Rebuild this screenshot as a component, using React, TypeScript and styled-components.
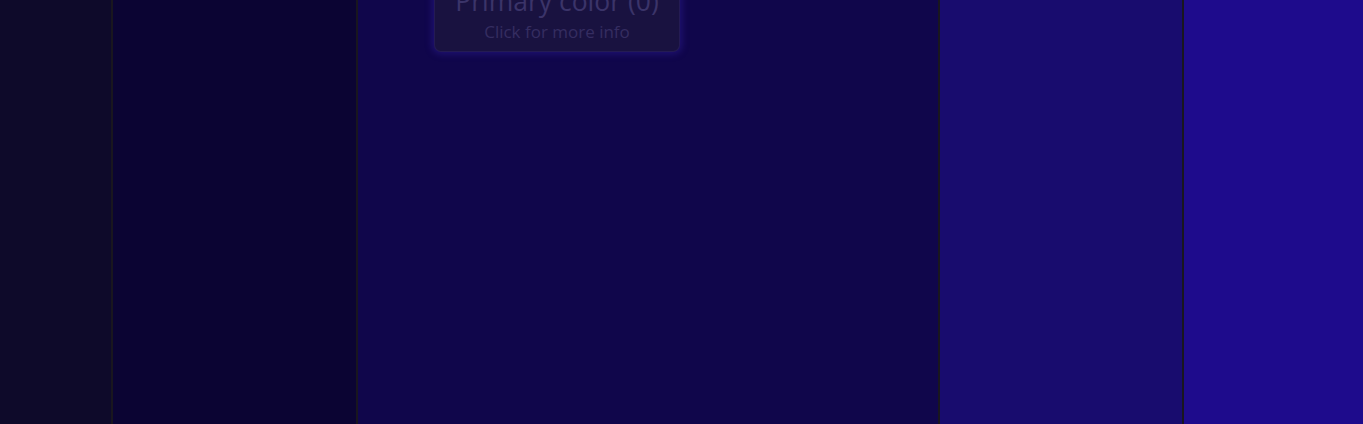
import React from "react";
import styled, { createGlobalStyle } from "styled-components";

const Global = createGlobalStyle`
  html, body { margin: 0; padding: 0; background: #0e0a2a; overflow: hidden; }
  #root { width: 1363px; height: 424px; }
`;

const Strip = styled.div`
  position: relative;
  display: flex;
  width: 1363px;
  height: 424px;
  overflow: hidden;
  font-family: "Open Sans", "Noto Sans", sans-serif;
`;

const Swatch = styled.div<{ $bg: string; $w: number; $first?: boolean }>`
  flex: 0 0 ${(p) => p.$w}px;
  height: 100%;
  background: ${(p) => p.$bg};
  border-left: ${(p) => (p.$first ? "none" : "2px solid #19161f")};
  box-sizing: border-box;
`;

const Tooltip = styled.div`
  position: absolute;
  left: 434px;
  top: -24px;
  width: 246px;
  box-sizing: border-box;
  padding: 8px 10px;
  display: flex;
  flex-direction: column;
  align-items: center;
  gap: 4px;
  background: #191240;
  border: 1px solid rgba(120, 100, 220, 0.12);
  border-radius: 7px;
  box-shadow: 0 0 7px 2px rgba(60, 40, 190, 0.35);
`;

const Title = styled.div`
  font-size: 26.5px;
  line-height: 32px;
  color: #3b3469;
  white-space: nowrap;
`;

const Sub = styled.div`
  font-size: 17px;
  line-height: 22px;
  color: #352d61;
  white-space: nowrap;
`;

const swatches = [
  { bg: "#0e0a2a", w: 111 },
  { bg: "#0b0433", w: 245 },
  { bg: "#10064b", w: 582 },
  { bg: "#180c6e", w: 244 },
  { bg: "#1e0b8c", w: 181 },
];

export default function App() {
  return (
    <>
      <Global />
      <Strip>
        {swatches.map((s, i) => (
          <Swatch key={i} $bg={s.bg} $w={s.w} $first={i === 0} />
        ))}
        <Tooltip>
          <Title>Primary color (0)</Title>
          <Sub>Click for more info</Sub>
        </Tooltip>
      </Strip>
    </>
  );
}
